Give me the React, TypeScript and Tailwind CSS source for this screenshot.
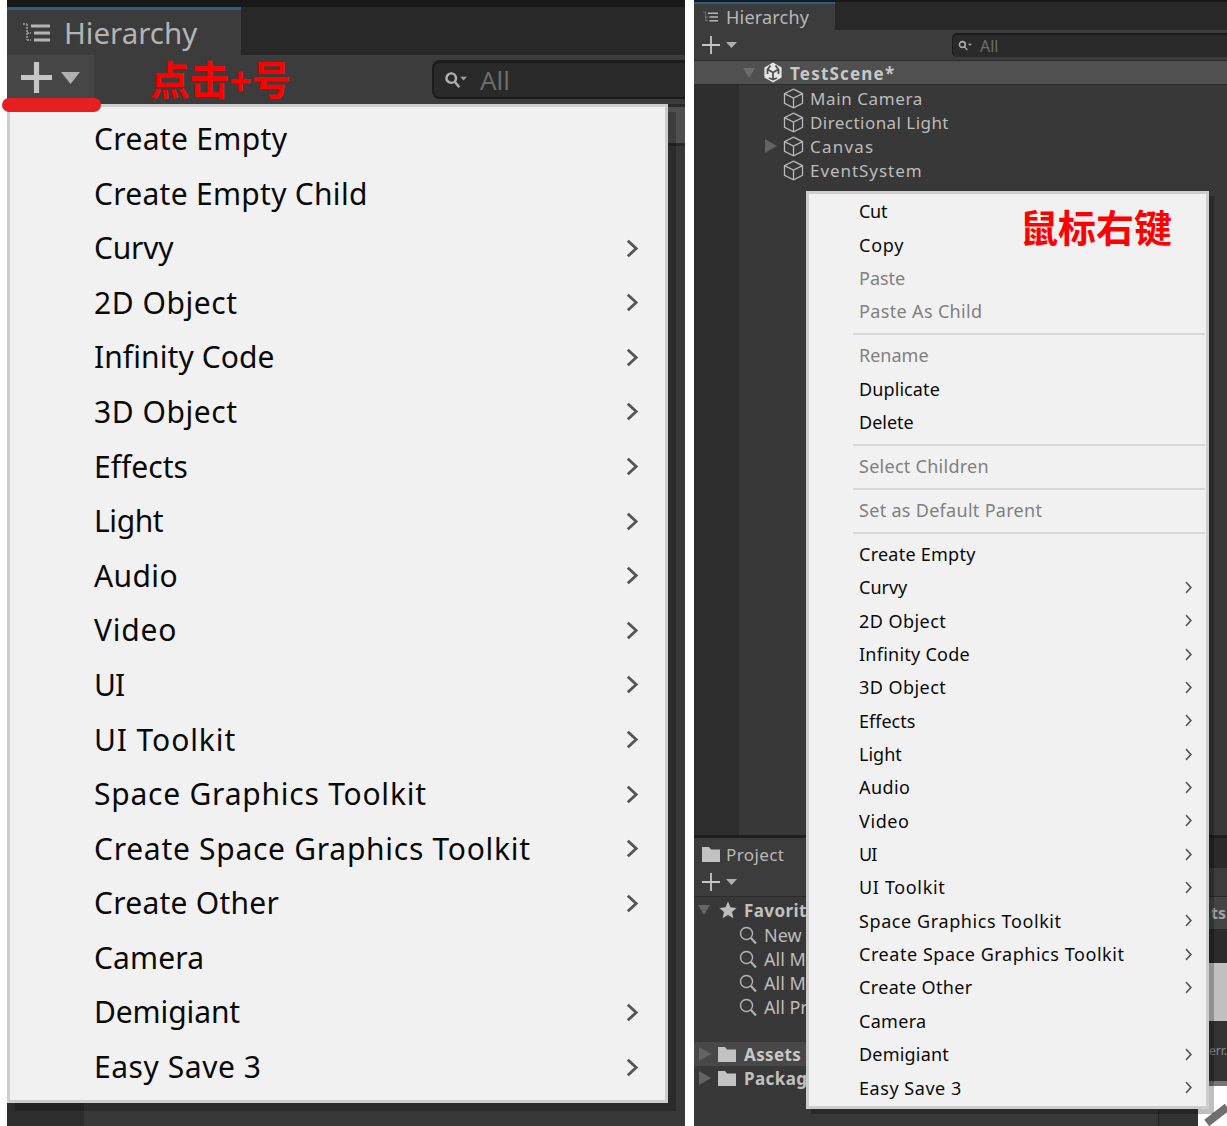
const leftItems: [string, boolean, string][] = [
  ["Create Empty", false, "tracking-[0.33px]"],
  ["Create Empty Child", false, "tracking-[0.28px]"],
  ["Curvy", true, "tracking-[-0.2px]"],
  ["2D Object", true, "tracking-[0.55px]"],
  ["Infinity Code", true, "tracking-[0.08px]"],
  ["3D Object", true, "tracking-[0.55px]"],
  ["Effects", true, "tracking-[0px]"],
  ["Light", true, "tracking-[-0.4px]"],
  ["Audio", true, "tracking-[0.4px]"],
  ["Video", true, "tracking-[0.8px]"],
  ["UI", true, "tracking-[-1px]"],
  ["UI Toolkit", true, "tracking-[0.9px]"],
  ["Space Graphics Toolkit", true, "tracking-[0.77px]"],
  ["Create Space Graphics Toolkit", true, "tracking-[0.72px]"],
  ["Create Other", true, "tracking-[0.25px]"],
  ["Camera", false, "tracking-[0.15px]"],
  ["Demigiant", true, "tracking-[-0.1px]"],
  ["Easy Save 3", true, "tracking-[0.55px]"],
];

type Entry = { t: string; k: string; dim?: boolean; sub?: boolean } | "sep";
const rightItems: Entry[] = [
  { t: "Cut", k: "tracking-[-0.3px]" },
  { t: "Copy", k: "tracking-[0.75px]" },
  { t: "Paste", dim: true, k: "tracking-[0px]" },
  { t: "Paste As Child", dim: true, k: "tracking-[0.35px]" },
  "sep",
  { t: "Rename", dim: true, k: "tracking-[0px]" },
  { t: "Duplicate", k: "tracking-[0.1px]" },
  { t: "Delete", k: "tracking-[0px]" },
  "sep",
  { t: "Select Children", dim: true, k: "tracking-[0.27px]" },
  "sep",
  { t: "Set as Default Parent", dim: true, k: "tracking-[0.3px]" },
  "sep",
  { t: "Create Empty", k: "tracking-[0.25px]" },
  { t: "Curvy", sub: true, k: "tracking-[0px]" },
  { t: "2D Object", sub: true, k: "tracking-[0.45px]" },
  { t: "Infinity Code", sub: true, k: "tracking-[0.25px]" },
  { t: "3D Object", sub: true, k: "tracking-[0.45px]" },
  { t: "Effects", sub: true, k: "tracking-[0px]" },
  { t: "Light", sub: true, k: "tracking-[0px]" },
  { t: "Audio", sub: true, k: "tracking-[0.4px]" },
  { t: "Video", sub: true, k: "tracking-[0.6px]" },
  { t: "UI", sub: true, k: "tracking-[-1px]" },
  { t: "UI Toolkit", sub: true, k: "tracking-[0.65px]" },
  { t: "Space Graphics Toolkit", sub: true, k: "tracking-[0.6px]" },
  { t: "Create Space Graphics Toolkit", sub: true, k: "tracking-[0.55px]" },
  { t: "Create Other", sub: true, k: "tracking-[0.35px]" },
  { t: "Camera", k: "tracking-[0.3px]" },
  { t: "Demigiant", sub: true, k: "tracking-[0.2px]" },
  { t: "Easy Save 3", sub: true, k: "tracking-[0.55px]" },
];

function Chevron({ w, h, sw }: { w: number; h: number; sw: number }) {
  return (
    <svg width={w} height={h} viewBox="0 0 10 16" fill="none" preserveAspectRatio="none" className="shrink-0">
      <path d="M1.5 1.5 L8.5 8 L1.5 14.5" stroke="#555555" strokeWidth={sw} />
    </svg>
  );
}

function ListIcon({ w, h }: { w: number; h: number }) {
  return (
    <svg width={w} height={h} viewBox="0 0 28 20" fill="none" className="shrink-0">
      <path d="M9 3H28M12 10H28M12 17H28" stroke="#b4b4b4" strokeWidth="3" />
      <path d="M1 1H5M5 1V17M5 10H9M5 17H9" stroke="#8a8a8a" strokeWidth="2" strokeDasharray="2 1" />
    </svg>
  );
}

function Plus({ s, sw }: { s: number; sw: number }) {
  return (
    <svg width={s} height={s} viewBox="0 0 30 30" className="shrink-0">
      <path d="M15 0V30M0 15H30" stroke="#c6c6c6" strokeWidth={sw} />
    </svg>
  );
}

function TriDown({ w, h, c = "#b0b0b0" }: { w: number; h: number; c?: string }) {
  return (
    <svg width={w} height={h} viewBox="0 0 10 8" preserveAspectRatio="none" className="shrink-0">
      <path d="M0 0H10L5 8Z" fill={c} />
    </svg>
  );
}

function TriRight({ c = "#636363" }: { c?: string }) {
  return (
    <svg width="12" height="14" viewBox="0 0 12 14" className="shrink-0">
      <path d="M0 0L12 7L0 14Z" fill={c} />
    </svg>
  );
}

function KeySearch({ w, h }: { w: number; h: number }) {
  return (
    <svg width={w} height={h} viewBox="0 0 24 20" fill="none" className="shrink-0">
      <circle cx="7.5" cy="7.5" r="5" stroke="#b0b0b0" strokeWidth="2.6" />
      <path d="M11 11L16 17" stroke="#b0b0b0" strokeWidth="2.4" />
      <path d="M17 6H24L20.5 10Z" fill="#a0a0a0" />
    </svg>
  );
}

function Cube() {
  return (
    <svg width="21" height="21" viewBox="0 0 21 21" fill="none" className="shrink-0">
      <path
        d="M10.5 1.2L19.5 5.6V15.4L10.5 19.8L1.5 15.4V5.6Z M1.5 5.6L10.5 10L19.5 5.6 M10.5 10V19.8"
        stroke="#b8b8b8"
        strokeWidth="1.3"
      />
    </svg>
  );
}

function Unity() {
  return (
    <svg width="20" height="21" viewBox="0 0 20 21" className="shrink-0">
      <path d="M10 0.5L18.6 5.5V15.5L10 20.5L1.4 15.5V5.5Z" fill="#e6e6e6" />
      <path
        d="M10 10.5L10 17.5M10 10.5L4 7M10 10.5L16 7M7.5 3.5L4.5 7.5L4.5 12M12.5 3.5L15.5 7.5L15.5 12M6 16L10 17.5L14 16"
        stroke="#505050"
        strokeWidth="1.8"
        fill="none"
      />
    </svg>
  );
}

function Folder() {
  return (
    <svg width="18" height="15" viewBox="0 0 18 15" className="shrink-0">
      <path d="M0 0H7L9 2.5H18V15H0Z" fill="#c2c2c2" />
    </svg>
  );
}

function Star() {
  return (
    <svg width="18" height="18" viewBox="0 0 18 18" className="shrink-0">
      <path d="M9 0.5L11.5 6.3L17.6 6.9L13 11L14.4 17.2L9 14L3.6 17.2L5 11L0.4 6.9L6.5 6.3Z" fill="#bdbdbd" />
    </svg>
  );
}

function Mag() {
  return (
    <svg width="18" height="19" viewBox="0 0 18 19" fill="none" className="shrink-0">
      <circle cx="7.5" cy="7.5" r="6" stroke="#b4b4b4" strokeWidth="1.4" />
      <path d="M12 12L17 17.5" stroke="#b4b4b4" strokeWidth="2" />
    </svg>
  );
}

function LeftPanel() {
  return (
    <div className="relative flex h-[1126px] w-[678px] shrink-0 flex-col bg-[#383838]">
      <div className="h-[7px] bg-[#191919]" />
      <div className="flex h-[48px] bg-[#282828]">
        <div className="flex w-[234px] items-center gap-[14px] border-t-[3px] border-[#2c5d87] bg-[#3c3c3c] pl-[15px]">
          <ListIcon w={28} h={20} />
          <span className="text-[29.5px] leading-none text-[#b4b4b4]">Hierarchy</span>
        </div>
      </div>
      <div className="flex h-[49px] items-start bg-[#3c3c3c]">
        <div className="flex h-[45px] w-[87px] items-center gap-[9px] bg-[#464646] pl-[14px]">
          <Plus s={31} sw={5} />
          <TriDown w={19} h={12} />
        </div>
        <div className="ml-[338px] mt-[5px] flex h-[39px] flex-1 items-center gap-[13px] rounded-l-[8px] border-t-[3px] border-b-[2px] border-l-[2px] border-[#1c1c1c] bg-[#2a2a2a] pl-[10px]">
          <KeySearch w={23} h={19} />
          <span className="text-[26px] leading-none text-[#6c6c6c]">All</span>
        </div>
      </div>
      <div className="h-[3px] bg-[#292929]" />
      <div className="h-[36px] bg-[#4f4f4f]" />
      <div className="h-[3px] bg-[#2a2a2a]" />
      <div className="flex flex-1">
        <div className="w-[77px] bg-[#2d2d2d]" />
      </div>

      <span className="absolute left-[143px] top-[56px] text-[39.5px] font-bold leading-[48px] text-[#ff0000]">
        点击+号
      </span>

      <div className="absolute left-0 top-[104px] flex h-[999px] w-[661px] flex-col border-[3px] border-[#cdcdcd] bg-[#f1f1f1] pt-[4.7px] shadow-[8px_8px_0_rgba(0,0,0,0.22)]">
        {leftItems.map(([t, sub, k]) => (
          <div key={t} className="flex h-[54.6px] shrink-0 items-center justify-between pl-[84px] pr-[27px]">
            <span className={`text-[30px] leading-none text-[#0a0a0a] ${k}`}>{t}</span>
            {sub && <Chevron w={12} h={19} sw={2.4} />}
          </div>
        ))}
      </div>

      <div className="absolute left-[-5px] top-[98px] h-[14px] w-[99px] rounded-full bg-[#e62020]" />
    </div>
  );
}

function TreeRow({ children }: { children: React.ReactNode }) {
  return <div className="flex h-[24.2px] items-center">{children}</div>;
}

function RightPanel() {
  return (
    <div className="relative flex h-[1126px] w-[533px] shrink-0 flex-col overflow-hidden bg-[#383838] text-[#c0c0c0]">
      <div className="h-[2px] bg-[#191919]" />
      <div className="flex h-[28px] bg-[#282828]">
        <div className="flex w-[141px] items-center gap-[8px] border-t-[2px] border-[#2c5d87] bg-[#3c3c3c] pl-[9px]">
          <ListIcon w={15} h={12} />
          <span className="text-[18px] leading-none tracking-[0.2px] text-[#b8b8b8]">Hierarchy</span>
        </div>
      </div>
      <div className="flex h-[31px] items-center border-b-[1px] border-[#2a2a2a] bg-[#3c3c3c] pl-[8px]">
        <Plus s={18} sw={3} />
        <div className="ml-[6px]">
          <TriDown w={11} h={6} />
        </div>
        <div className="ml-[215px] flex h-[24px] flex-1 items-center gap-[8px] rounded-l-[5px] border-t-[2px] border-l-[1px] border-[#1c1c1c] bg-[#2a2a2a] pl-[5px]">
          <KeySearch w={14} h={12} />
          <span className="text-[16px] leading-none text-[#6e6e6e]">All</span>
        </div>
      </div>
      <div className="flex h-[24px] items-center border-b-[1px] border-[#2a2a2a] bg-[#505050] pl-[49px]">
        <TriDown w={12} h={10} c="#6c6c6c" />
        <div className="ml-[8px]">
          <Unity />
        </div>
        <span className="ml-[7px] mt-[1px] text-[17px] font-bold leading-none tracking-[1.2px] text-[#c8c8c8]">TestScene*</span>
      </div>

      <div className="flex h-[750px]">
        <div className="w-[45px] bg-[#2d2d2d]" />
        <div className="flex-1 pt-[1px]">
          {(
            [
              ["Main Camera", false, "tracking-[0.6px]"],
              ["Directional Light", false, "tracking-[0.45px]"],
              ["Canvas", true, "tracking-[1.2px]"],
              ["EventSystem", false, "tracking-[0.95px]"],
            ] as [string, boolean, string][]
          ).map(([n, tri, k]) => (
            <TreeRow key={n}>
              <div className="flex w-[44px] justify-end pr-[6px]">{tri ? <TriRight /> : null}</div>
              <Cube />
              <span className={`ml-[6px] text-[17px] leading-none text-[#bcbcbc] ${k}`}>{n}</span>
            </TreeRow>
          ))}
        </div>
      </div>

      <div className="h-[3px] bg-[#1e1e1e]" />
      <div className="flex h-[30px] bg-[#2a2a2a]">
        <div className="flex w-[120px] items-center gap-[6px] bg-[#3c3c3c] pl-[8px] pt-[2px]">
          <Folder />
          <span className="text-[17px] leading-none tracking-[0.4px] text-[#b8b8b8]">Project</span>
        </div>
      </div>
      <div className="flex h-[29px] items-center border-b-[1px] border-[#2a2a2a] bg-[#3c3c3c] pl-[8px]">
        <Plus s={18} sw={3} />
        <div className="ml-[6px]">
          <TriDown w={11} h={6} />
        </div>
      </div>

      <div className="flex flex-1">
        <div className="flex w-[464px] flex-col">
          <div className="flex h-[26px] items-center pl-[4px]">
            <TriDown w={12} h={10} c="#666666" />
            <div className="ml-[9px]">
              <Star />
            </div>
            <span className="ml-[7px] text-[17px] font-bold leading-none tracking-[0.4px] text-[#c0c0c0]">Favorites</span>
          </div>
          {["New Scene", "All Materials", "All Models", "All Prefabs"].map((n) => (
            <div key={n} className="flex h-[24px] items-center pl-[45px]">
              <Mag />
              <span className="ml-[7px] text-[18px] leading-none text-[#bcbcbc]">{n}</span>
            </div>
          ))}
          <div className="mt-[23px] flex h-[24px] items-center bg-[#484848] pl-[5px]">
            <TriRight />
            <div className="ml-[7px]">
              <Folder />
            </div>
            <span className="ml-[8px] text-[17px] font-bold leading-none tracking-[0.4px] text-[#c8c8c8]">Assets</span>
          </div>
          <div className="flex h-[24px] items-center pl-[5px]">
            <TriRight />
            <div className="ml-[7px]">
              <Folder />
            </div>
            <span className="ml-[8px] text-[17px] font-bold leading-none tracking-[0.4px] text-[#c0c0c0]">Packages</span>
          </div>
        </div>
        <div className="flex flex-1 flex-col bg-[#2b2b2b]">
          <div className="flex h-[33px] items-center justify-end overflow-hidden border-b-[1px] border-[#2a2a2a] bg-[#444444] pr-[1px]">
            <span className="text-[16px] font-bold leading-none text-[#a0a0a0]">ts</span>
          </div>
          <div className="h-[33px]" />
          <div className="h-[58px] bg-[#c0c0c0]" />
          <div className="flex h-[60px] items-center justify-end bg-[#333333]">
            <span className="text-[12px] leading-none text-[#8a8a8a]">err.</span>
          </div>
          <div className="h-[5px] bg-[#777777]" />
          <div className="flex flex-1">
            <div className="flex w-[40px] flex-col justify-end bg-[#333333]">
              <div className="h-[16px] border-l-[1px] border-[#222222]" />
            </div>
            <div className="relative flex-1 bg-white">
              <div className="absolute left-[6px] top-[25px] h-[8px] w-[26px] -rotate-[38deg] bg-[#6f6f6f]" />
            </div>
          </div>
        </div>
      </div>

      <div className="absolute left-[112px] top-[191px] flex h-[918px] w-[403px] flex-col border-[3px] border-[#cdcdcd] bg-[#f1f1f1] pt-[0.5px] shadow-[5px_5px_0_rgba(0,0,0,0.25)]">
        {rightItems.map((e, i) =>
          e === "sep" ? (
            <div key={i} className="flex h-[10.7px] shrink-0 items-center pl-[44px] pr-[1px] pt-[2px]">
              <div className="h-[2px] w-full bg-[#d8d8d8]" />
            </div>
          ) : (
            <div key={i} className="flex h-[33.35px] shrink-0 items-center justify-between pl-[50px] pr-[14px]">
              <span className={`text-[18px] leading-none ${e.dim ? "text-[#808080]" : "text-[#0a0a0a]"} ${e.k}`}>{e.t}</span>
              {e.sub && <Chevron w={7} h={13} sw={2.2} />}
            </div>
          ),
        )}
      </div>

      <span className="absolute left-[326px] top-[204px] text-[38px] font-bold leading-[46px] text-[#ff0000]">
        鼠标右键
      </span>
    </div>
  );
}

export default function App() {
  return (
    <div className="flex h-[1126px] w-[1227px] gap-[9px] overflow-hidden bg-white pl-[7px] font-['Noto_Sans','Noto_Sans_CJK_SC',sans-serif]">
      <LeftPanel />
      <RightPanel />
    </div>
  );
}
